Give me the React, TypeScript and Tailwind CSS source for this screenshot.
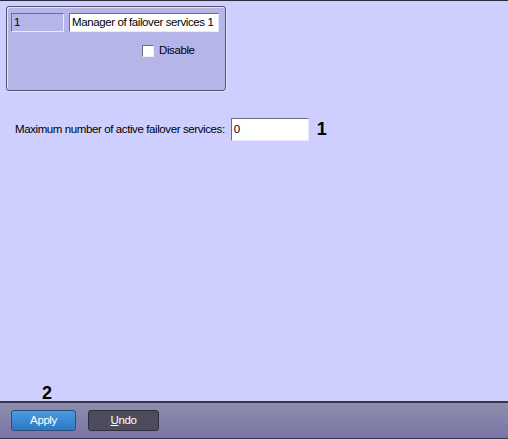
export default function App() {
  return (
    <div
      className="flex h-[439px] w-[508px] flex-col border-t border-[#2b2b3b] bg-[#cfcfff] text-[11.5px] tracking-[-0.4px] text-black"
      style={{ fontFamily: '"Liberation Sans", Arial, sans-serif' }}
    >
      <div className="flex flex-1 flex-col pl-[6px] pt-[5px]">
        {/* group box */}
        <div className="h-[85px] w-[220px] rounded-[3px] border border-[#55556a] bg-[#b5b5e8] shadow-[inset_1px_1px_0_#e4e4ff,1px_1px_0_#e4e4ff] px-[4px] pt-[6px]">
          <div className="flex gap-[5px]">
            <div className="flex h-[19px] w-[53px] items-center border border-t-[#6d6d80] border-l-[#6d6d80] border-r-[#e8e8ff] border-b-[#e8e8ff] pl-[2px]">
              1
            </div>
            <div className="flex h-[19px] w-[150px] items-center whitespace-nowrap border border-t-[#6d6d80] border-l-[#6d6d80] border-r-[#e8e8ff] border-b-[#e8e8ff] bg-white pl-[2px]">
              Manager of failover services 1
            </div>
          </div>
          <div className="mt-[10px] flex items-center pl-[131px]">
            <div className="h-[12px] w-[12px] border border-t-[#6d6d80] border-l-[#6d6d80] border-r-[#f0f0ff] border-b-[#f0f0ff] bg-white" />
            <span className="ml-[5px]">Disable</span>
          </div>
        </div>

        <div className="mt-[25px] flex items-center pl-[9px]">
          <span className="whitespace-nowrap">Maximum number of active failover services:</span>
          <div className="ml-[6px] flex h-[23px] w-[78px] items-center border border-t-[#6d6d80] border-l-[#6d6d80] border-r-[#e8e8ff] border-b-[#e8e8ff] bg-white pl-[2px]">
            0
          </div>
          <span className="ml-[8px] text-[18px] font-bold tracking-normal">1</span>
        </div>

        <div className="mt-auto pb-[1px] pl-[36px] text-[18px] font-bold leading-[14px] tracking-normal">2</div>
      </div>

      {/* footer */}
      <div className="flex h-[38px] items-center gap-[12px] border-t-2 border-b border-t-[#35354a] border-b-[#35354a] bg-gradient-to-b from-[#8e8eac] to-[#7a74a6] pl-[11px]">
        <button className="h-[21px] w-[65px] rounded-[3px] border border-[#2a4f7a] bg-gradient-to-b from-[#4a9be0] to-[#2f78c4] text-[11.5px] text-white">
          Apply
        </button>
        <button className="h-[21px] w-[71px] rounded-[3px] border border-[#2f2f3c] bg-[#4e4c5c] text-[11.5px] text-white">
          <span className="underline">U</span>ndo
        </button>
      </div>
    </div>
  );
}
